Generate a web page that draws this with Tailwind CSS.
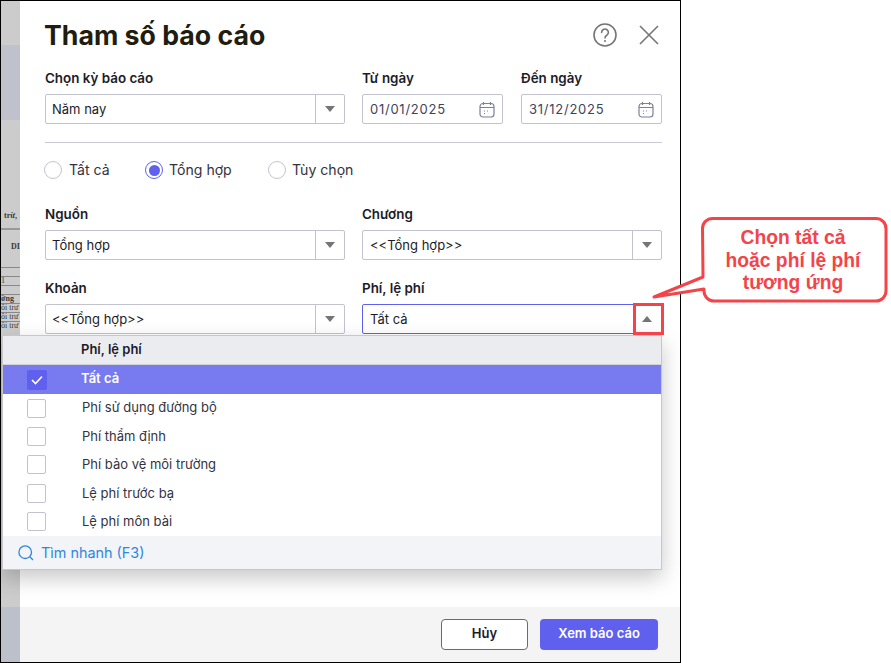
<!DOCTYPE html>
<html lang="vi"><head><meta charset="utf-8"><script src="https://cdn.jsdelivr.net/npm/@tailwindcss/browser@4"></script></head>
<body class="bg-white">
<div class="relative w-[891px] h-[663px] overflow-hidden font-['Inter',sans-serif] text-[#1c1c28]">
  <div class="flex w-[681px] h-[663px] border border-black">
    <!-- page behind the dialog -->
    <div class="w-[19px] shrink-0 flex flex-col bg-[#cccccc] overflow-hidden font-['Liberation_Serif',serif] text-[8px] font-bold text-[#3a3a3a] leading-none whitespace-nowrap">
      <div class="h-[44px]"></div>
      <div class="h-[75px] bg-[#bfc2cc]"></div>
      <div class="h-[92px]"></div>
      <div class="h-[16px] pl-[3px]">trừ,</div>
      <div class="h-[39px] border-t-2 border-[#999] pl-[10px] pt-[13px]">DIỄ</div>
      <div class="h-[9px] border-t border-[#888]"></div>
      <div class="h-[9px] border-t border-[#888] font-normal">1</div>
      <div class="h-[9px] border-t border-[#888]"></div>
      <div class="h-[9px] border-t border-[#888] leading-[8px]">ờng</div>
      <div class="h-[9px] leading-[8px] font-normal border-t border-[#888]">ôi trư</div>
      <div class="h-[9px] leading-[8px] font-normal border-t border-[#888]">ôi trư</div>
      <div class="h-[9px] leading-[8px] font-normal border-t border-[#888]">ôi trư</div>
      <div class="flex-1"></div>
      <div class="h-[55px] bg-[#bcc0ca]"></div>
    </div>
    <!-- dialog -->
    <div class="flex-1 flex flex-col bg-white rounded-tl-[6px]">
      <div class="flex-1 pl-[25px] pr-[18px] pt-[16px]">
        <div class="flex items-center justify-between h-[36px]">
          <h1 class="text-[26.7px] font-bold text-[#1f1d10] leading-none -ml-[1px]">Tham số báo cáo</h1>
          <div class="flex items-center gap-[22px] pr-[3px]">
            <svg width="24" height="24" viewBox="0 0 24 24" fill="none" stroke="#757575" stroke-width="1.6"><circle cx="12" cy="12" r="11"/><path d="M8.6 9.4a3.4 3.4 0 1 1 5.2 2.9c-1.2.7-1.8 1.3-1.8 2.6" stroke-linecap="round"/><circle cx="12" cy="18" r="1" fill="#757575" stroke="none"/></svg>
            <svg width="20" height="20" viewBox="0 0 20 20" fill="none" stroke="#757575" stroke-width="1.6"><path d="M1 1l18 18M19 1L1 19"/></svg>
          </div>
        </div>
        <div class="grid grid-cols-[300px_141px_141px] gap-x-[17px] mt-[16px]">
          <div>
            <label class="block text-[13.4px] font-semibold leading-[19px]">Chọn kỳ báo cáo</label>
            <div class="mt-[6px] flex h-[30px] border border-[#c3c3d0] rounded-[2px] text-[13px] items-center">
              <span class="flex-1 pl-[6px] pt-[2px]">Năm nay</span>
              <span class="w-[29px] h-full border-l border-[#c3c3d0] flex items-center justify-center"><svg width="10" height="6"><path d="M0 0h10L5 6z" fill="#757575"/></svg></span>
            </div>
          </div>
          <div>
            <label class="block text-[13.4px] font-semibold leading-[19px]">Từ ngày</label>
            <div class="mt-[6px] flex h-[30px] border border-[#c3c3d0] rounded-[2px] text-[13px] items-center justify-between pl-[7px] pr-[7px] text-[#3f4360]">
              <span class="tracking-[0.75px] pt-[2px]">01/01/2025</span>
              <svg width="16" height="17" viewBox="0 0 16 17" fill="none" stroke="#7d8099" stroke-width="1.2"><rect x="1" y="2.5" width="14" height="13.5" rx="3"/><path d="M1 6.5h14M4.5 1v3M11.5 1v3"/><path d="M5 10h1M8 10h1M5 12.500h1" stroke-width="1"/></svg>
            </div>
          </div>
          <div class="ml-[1px] -mr-[1px]">
            <label class="block text-[13.4px] font-semibold leading-[19px]">Đến ngày</label>
            <div class="mt-[6px] flex h-[30px] border border-[#c3c3d0] rounded-[2px] text-[13px] items-center justify-between pl-[7px] pr-[7px] text-[#3f4360]">
              <span class="tracking-[0.75px] pt-[2px]">31/12/2025</span>
              <svg width="16" height="17" viewBox="0 0 16 17" fill="none" stroke="#7d8099" stroke-width="1.2"><rect x="1" y="2.5" width="14" height="13.5" rx="3"/><path d="M1 6.5h14M4.5 1v3M11.5 1v3"/><path d="M5 10h1M8 10h1M5 12.500h1" stroke-width="1"/></svg>
            </div>
          </div>
        </div>
        <div class="h-px bg-[#c9c9d6] mt-[18px]"></div>
        <div class="flex items-center h-[18px] mt-[18px] text-[14.1px] text-[#33333f]">
          <span class="w-[18px] h-[18px] -ml-px rounded-full border border-[#c3c3d0]"></span><span class="ml-[7px] w-[76px] pb-[1px]">Tất cả</span>
          <span class="w-[18px] h-[18px] rounded-full border border-[#5f60ee] flex items-center justify-center"><span class="w-[11px] h-[11px] rounded-full bg-[#5f60ee]"></span></span><span class="ml-[6px] w-[99px] pb-[1px]">Tổng hợp</span>
          <span class="w-[18px] h-[18px] rounded-full border border-[#c3c3d0]"></span><span class="ml-[6px] pb-[1px]">Tùy chọn</span>
        </div>
        <div class="grid grid-cols-[300px_300px] gap-x-[17px] gap-y-[19px] mt-[26px]">
          <div>
            <label class="block text-[13.4px] font-semibold leading-[19px]">Nguồn</label>
            <div class="mt-[6px] flex h-[30px] border border-[#c3c3d0] rounded-[2px] text-[13px] items-center">
              <span class="flex-1 pl-[6px] pt-[2px]">Tổng hợp</span>
              <span class="w-[29px] h-full border-l border-[#c3c3d0] flex items-center justify-center"><svg width="10" height="6"><path d="M0 0h10L5 6z" fill="#757575"/></svg></span>
            </div>
          </div>
          <div>
            <label class="block text-[13.4px] font-semibold leading-[19px]">Chương</label>
            <div class="mt-[6px] flex h-[30px] border border-[#c3c3d0] rounded-[2px] text-[13px] items-center">
              <span class="flex-1 pl-[7px] pt-[2px]">&lt;&lt;Tổng hợp&gt;&gt;</span>
              <span class="w-[29px] h-full border-l border-[#c3c3d0] flex items-center justify-center"><svg width="10" height="6"><path d="M0 0h10L5 6z" fill="#757575"/></svg></span>
            </div>
          </div>
          <div>
            <label class="block text-[13.4px] font-semibold leading-[19px]">Khoản</label>
            <div class="mt-[6px] flex h-[30px] border border-[#c3c3d0] rounded-[2px] text-[13px] items-center">
              <span class="flex-1 pl-[6px] pt-[2px]">&lt;&lt;Tổng hợp&gt;&gt;</span>
              <span class="w-[29px] h-full border-l border-[#c3c3d0] flex items-center justify-center"><svg width="10" height="6"><path d="M0 0h10L5 6z" fill="#757575"/></svg></span>
            </div>
          </div>
          <div>
            <label class="block text-[13.4px] font-semibold leading-[19px]">Phí, lệ phí</label>
            <div class="mt-[6px] flex h-[30px] border border-[#5f60ee] rounded-[2px] text-[13px] items-center">
              <span class="flex-1 pl-[7px] pt-[2px]">Tất cả</span>
              <span class="w-[29px] h-full flex items-center justify-center"><svg width="10" height="6"><path d="M0 6h10L5 0z" fill="#757575"/></svg></span>
            </div>
          </div>
        </div>
      </div>
      <div class="h-[55px] bg-[#f4f4f5] flex items-center justify-end gap-[12px] pr-[22px] pb-[1px] text-[13px] font-semibold">
        <button class="w-[87px] h-[31px] bg-white border border-[#6b6b6b] rounded-[4px]">Hủy</button>
        <button class="w-[118px] h-[31px] bg-[#5f60ee] text-white rounded-[4px]">Xem báo cáo</button>
      </div>
    </div>
  </div>

  <!-- dropdown -->
  <div class="absolute left-[2px] top-[335px] w-[660px] h-[235px] flex flex-col bg-white border border-[#c6c6cc] shadow-[0_8px_20px_rgba(0,0,0,0.22)] text-[13px] text-[#33333f]">
    <div class="h-[29px] bg-[#ebecef] border-b border-[#d0d2d8] pl-[78px] flex items-center font-semibold text-[#1c1c28]">Phí, lệ phí</div>
    <div class="h-[29px] bg-[#787bf0] flex items-center text-white font-semibold">
      <span class="ml-[24px] w-[20px] h-[20px] rounded-[2px] bg-[#5f60ee] flex items-center justify-center"><svg width="12" height="10" viewBox="0 0 12 10" fill="none" stroke="#fff" stroke-width="1.7"><path d="M1 5l3.500 3.500L11 1.500"/></svg></span>
      <span class="ml-[34px] pb-[2px]">Tất cả</span>
    </div>
    <div class="flex-1 flex flex-col">
      <div class="h-[28.4px] flex items-center"><span class="ml-[24px] w-[19px] h-[19px] rounded-[2px] border border-[#c3c3d0]"></span><span class="ml-[36px]">Phí sử dụng đường bộ</span></div>
      <div class="h-[28.4px] flex items-center"><span class="ml-[24px] w-[19px] h-[19px] rounded-[2px] border border-[#c3c3d0]"></span><span class="ml-[36px]">Phí thẩm định</span></div>
      <div class="h-[28.4px] flex items-center"><span class="ml-[24px] w-[19px] h-[19px] rounded-[2px] border border-[#c3c3d0]"></span><span class="ml-[36px]">Phí bảo vệ môi trường</span></div>
      <div class="h-[28.4px] flex items-center"><span class="ml-[24px] w-[19px] h-[19px] rounded-[2px] border border-[#c3c3d0]"></span><span class="ml-[36px]">Lệ phí trước bạ</span></div>
      <div class="h-[28.4px] flex items-center"><span class="ml-[24px] w-[19px] h-[19px] rounded-[2px] border border-[#c3c3d0]"></span><span class="ml-[36px]">Lệ phí môn bài</span></div>
    </div>
    <div class="h-[33px] bg-[#f3f4f8] flex items-center pl-[15px] text-[14.4px] text-[#2f86dd]">
      <svg width="16" height="16" viewBox="0 0 16 16" fill="none" stroke="#2f86dd" stroke-width="1.3"><circle cx="7.2" cy="7.2" r="6.3"/><path d="M11.8 11.8L15 15"/></svg>
      <span class="ml-[7px]">Tìm nhanh (F3)</span>
    </div>
  </div>

  <!-- red highlight -->
  <div class="absolute left-[633px] top-[303px] w-[31px] h-[32px] border-[3px] border-[#f4444a]"></div>

  <!-- callout -->
  <svg class="absolute left-[640px] top-[214px]" width="251" height="92" viewBox="0 0 251 92" fill="none">
    <path d="M72.500 4.500H236a10 10 0 0 1 10 10V77a10 10 0 0 1-10 10H74a10 10 0 0 1-10-10V75L14 83 63 63 62.500 14.500a10 10 0 0 1 10-10z" fill="#fff" stroke="#f4444a" stroke-width="3" stroke-linejoin="round"/>
  </svg>
  <div class="absolute left-[702px] top-[227px] w-[182px] text-center font-['Liberation_Sans',sans-serif] font-bold text-[19.3px] leading-[22.500px] text-[#f4444a]">Chọn tất cả<br>hoặc phí lệ phí<br>tương ứng</div>
</div>
</body></html>
